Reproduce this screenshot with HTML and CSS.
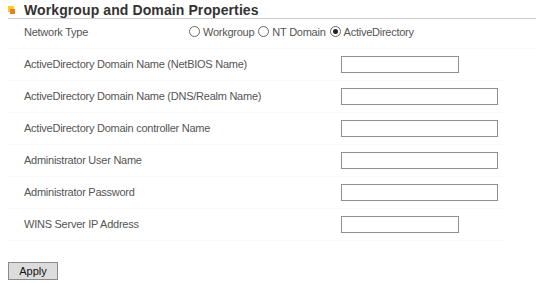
FILE: index.html
```html
<html lang="en">
<head>
  <meta charset="UTF-8">
  <title>Workgroup and Domain Properties</title>
  <link rel="stylesheet" href="styles.css">
</head>
<body>
  <div class="section">
    <h2 class="section-title"><span class="bullet"></span>Workgroup and Domain Properties</h2>

    <div class="type-row">
      <div class="type-label">Network Type</div>
      <label class="opt"><input type="radio" name="nettype">Workgroup</label>
      <label class="opt"><input type="radio" name="nettype">NT Domain</label>
      <label class="opt"><input type="radio" name="nettype" checked>ActiveDirectory</label>
    </div>

    <div class="row">
      <div class="label">ActiveDirectory Domain Name (NetBIOS Name)</div>
      <input class="field short" type="text">
    </div>
    <div class="row">
      <div class="label">ActiveDirectory Domain Name (DNS/Realm Name)</div>
      <input class="field" type="text">
    </div>
    <div class="row">
      <div class="label">ActiveDirectory Domain controller Name</div>
      <input class="field" type="text">
    </div>
    <div class="row">
      <div class="label">Administrator User Name</div>
      <input class="field" type="text">
    </div>
    <div class="row">
      <div class="label">Administrator Password</div>
      <input class="field" type="password">
    </div>
    <div class="row">
      <div class="label">WINS Server IP Address</div>
      <input class="field short" type="text">
    </div>
  </div>

  <button class="apply">Apply</button>
</body>
</html>
```

FILE: styles.css
```css
body {
  margin: 0;
  padding: 0 8px;
  font-family: "Liberation Sans", Arial, sans-serif;
  font-size: 11px;
  letter-spacing: -0.25px;
  color: #555;
  background: #fff;
}

.section {
  width: 528px;
}

.section-title {
  display: flex;
  align-items: center;
  margin: 0;
  padding: 2px 0 1px;
  font-size: 14px;
  letter-spacing: 0.1px;
  font-weight: bold;
  color: #333;
  border-bottom: 1px solid #cfcfcf;
  height: 15px;
}

.bullet {
  position: relative;
  width: 6px;
  height: 6px;
  margin: 0 10px 2px 0;
  background: #f5cf1f;
}

.bullet::after {
  content: "";
  position: absolute;
  left: 2px;
  top: 3px;
  width: 5px;
  height: 5px;
  background: #ec7d1c;
}

.type-row {
  display: flex;
  align-items: center;
  height: 25px;
  padding: 0 0 4px 16px;
  border-bottom: 1px solid #f9f9f9;
}

.type-label {
  width: 165px;
}

.opt {
  display: flex;
  align-items: center;
  margin-right: 4px;
}

.opt input {
  appearance: none;
  -webkit-appearance: none;
  width: 11px;
  height: 11px;
  margin: 0 3px 0 0;
  border: 1px solid #666;
  border-radius: 50%;
  background: #fff;
  display: grid;
  place-content: center;
}

.opt input:checked::before {
  content: "";
  width: 5px;
  height: 5px;
  border-radius: 50%;
  background: #222;
}

.row {
  display: flex;
  align-items: center;
  height: 31px;
  padding-left: 16px;
  width: 481px;
  border-bottom: 1px solid #f9f9f9;
}

.row .label {
  width: 317px;
  padding-bottom: 2px;
}

.field {
  box-sizing: border-box;
  width: 157px;
  height: 17px;
  margin: 0;
  border: 1px solid #8f8f8f;
  background: #fff;
  font-size: 12px;
}

.field.short {
  width: 118px;
}

.apply {
  display: block;
  box-sizing: border-box;
  margin-top: 21px;
  width: 50px;
  height: 18px;
  padding: 0;
  font-family: "Liberation Sans", Arial, sans-serif;
  font-size: 11px;
  color: #111;
  background: #dcdcdc;
  border: 1px solid #8a8a8a;
  border-radius: 0;
}
```
